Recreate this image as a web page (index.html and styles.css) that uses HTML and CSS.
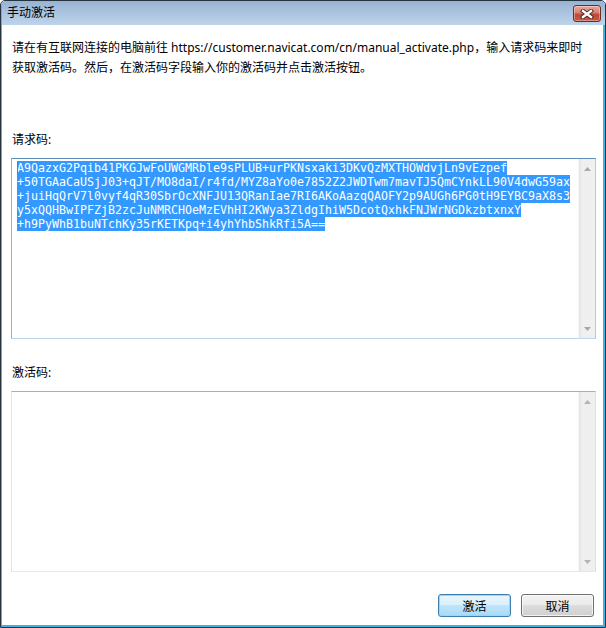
FILE: index.html
```html
<!DOCTYPE html>
<html lang="zh-CN">
<head>
    <meta charset="UTF-8">
    <title>手动激活</title>
    <link rel="stylesheet" href="styles.css">
</head>
<body>
    <div class="window">
        <div class="titlebar">
            <span class="title">手动激活</span>
            <button type="button" class="close-btn">
                <svg width="14" height="10" viewBox="0 0 14 10">
                    <path d="M3 2 L11 8 M11 2 L3 8" stroke="#4a2520" stroke-width="4.2" stroke-linecap="square"/>
                    <path d="M3 2 L11 8 M11 2 L3 8" stroke="#ffffff" stroke-width="2.4" stroke-linecap="square"/>
                </svg>
            </button>
        </div>

        <div class="frame">
            <div class="client">
                <p class="intro">请在有互联网连接的电脑前往 https://customer.navicat.com/cn/manual_activate.php，输入请求码来即时<br>获取激活码。然后，在激活码字段输入你的激活码并点击激活按钮。</p>

                <div class="field-label">请求码:</div>
                <div class="textbox focused">
                    <div class="textbox-body code">
                        <div class="code-line"><span class="sel"><span class="caret"></span>A9QazxG2Pqib41PKGJwFoUWGMRble9sPLUB+urPKNsxaki3DKvQzMXTHOWdvjLn9vEzpef</span></div>
                        <div class="code-line"><span class="sel">+50TGAaCaUSjJ03+qJT/MO8daI/r4fd/MYZ8aYo0e7852Z2JWDTwm7mavTJ5QmCYnkLL90V4dwG59ax</span></div>
                        <div class="code-line"><span class="sel">+juiHqQrV7l0vyf4qR30SbrOcXNFJU13QRanIae7RI6AKoAazqQAOFY2p9AUGh6PG0tH9EYBC9aX8s3</span></div>
                        <div class="code-line"><span class="sel">y5xQQHBwIPFZjB2zcJuNMRCHOeMzEVhHI2KWya3ZldgIhiW5DcotQxhkFNJWrNGDkzbtxnxY</span></div>
                        <div class="code-line"><span class="sel">+h9PyWhB1buNTchKy35rKETKpq+i4yhYhbShkRfi5A==</span></div>
                    </div>
                    <div class="scrollbar">
                        <div class="arrow"><svg width="7" height="4" viewBox="0 0 7 4"><path d="M0 4 L3.5 0 L7 4 Z" fill="#a8a8a8"/></svg></div>
                        <div class="arrow"><svg width="7" height="4" viewBox="0 0 7 4"><path d="M0 0 L7 0 L3.5 4 Z" fill="#a8a8a8"/></svg></div>
                    </div>
                </div>

                <div class="field-label second">激活码:</div>
                <div class="textbox">
                    <div class="textbox-body"></div>
                    <div class="scrollbar">
                        <div class="arrow"><svg width="7" height="4" viewBox="0 0 7 4"><path d="M0 4 L3.5 0 L7 4 Z" fill="#b4b4b4"/></svg></div>
                        <div class="arrow"><svg width="7" height="4" viewBox="0 0 7 4"><path d="M0 0 L7 0 L3.5 4 Z" fill="#b4b4b4"/></svg></div>
                    </div>
                </div>

                <div class="actions">
                    <button type="button" class="btn btn-default">激活</button>
                    <button type="button" class="btn">取消</button>
                </div>
            </div>
        </div>
    </div>
</body>
</html>
```

FILE: styles.css
```css
* {
    margin: 0;
    padding: 0;
    box-sizing: border-box;
}
body {
    width: 606px;
    height: 628px;
    background: #ffffff;
    font-family: "Noto Sans", "Noto Sans CJK SC", sans-serif;
    font-size: 12px;
    color: #000000;
}
.window {
    width: 606px;
    height: 628px;
    border: 1px solid #25333f;
    border-radius: 5px 5px 0 0;
    display: flex;
    flex-direction: column;
    overflow: hidden;
    background: #ffffff;
}
.titlebar {
    height: 24px;
    flex-shrink: 0;
    display: flex;
    justify-content: space-between;
    align-items: flex-start;
    background: linear-gradient(to bottom, #98b3d2 0%, #a9c2de 45%, #bed4ea 100%);
    border-left: 1px solid #8aa6c6;
}
.title {
    padding-left: 5px;
    line-height: 24px;
}
.close-btn {
    width: 28px;
    height: 17px;
    margin-top: 4px;
    margin-right: 4px;
    border: 1px solid #6b2e27;
    border-radius: 3px;
    background: linear-gradient(to bottom, #e8a99e 0%, #d7806f 45%, #c24a36 55%, #c6563f 100%);
    box-shadow: inset 0 0 0 1px rgba(255, 255, 255, 0.35);
    display: flex;
    align-items: center;
    justify-content: center;
}
.frame {
    flex: 1;
    border-left: 1px solid #7aa3cc;
    border-right: 2px solid #3fb2e2;
    border-bottom: 2px solid #3fb2e2;
    display: flex;
}
.client {
    flex: 1;
    background: #ffffff;
    padding: 13px 7px 8px 9px;
    display: flex;
    flex-direction: column;
}
.intro {
    line-height: 20px;
    padding-left: 1px;
    white-space: nowrap;
}
.field-label {
    line-height: 20px;
    padding-left: 1px;
    margin-top: 52px;
}
.field-label.second {
    margin-top: 24px;
}
.textbox {
    margin-top: 8px;
    height: 181px;
    display: flex;
    border: 1px solid;
    border-color: #abadb3 #dbdfe6 #e3e9ef #e2e3ea;
}
.textbox.focused {
    border-color: #5d8dbb #a9cbe7 #b9d8ee #8db2d3;
}
.textbox-body {
    flex: 1;
    padding: 2px 5px;
    overflow: hidden;
}
.code {
    font-family: "DejaVu Sans Mono", monospace;
    font-size: 11.63px;
    line-height: 14px;
}
.code-line {
    height: 14px;
    white-space: pre;
}
.sel {
    display: inline-block;
    height: 14px;
    background: #3399ff;
    color: #ffffff;
    position: relative;
}
.caret {
    position: absolute;
    left: 0;
    top: 0;
    width: 1px;
    height: 14px;
    background: #c8671a;
}
.scrollbar {
    width: 17px;
    flex-shrink: 0;
    display: flex;
    flex-direction: column;
    justify-content: space-between;
    background: linear-gradient(to right, #e3e3e3 0%, #efefef 20%, #f0f0f0 100%);
    border-left: 1px solid #f6f6f6;
}
.arrow {
    height: 19px;
    display: flex;
    align-items: center;
    justify-content: center;
}
.actions {
    margin-top: 22px;
    margin-right: 2px;
    display: flex;
    justify-content: flex-end;
    gap: 10px;
}
.btn {
    width: 73px;
    height: 23px;
    border: 1px solid #707070;
    border-radius: 3px;
    font-family: "Noto Sans", "Noto Sans CJK SC", sans-serif;
    font-size: 12px;
    color: #000000;
    background: linear-gradient(to bottom, #f2f2f2 0%, #ebebeb 50%, #dddddd 50%, #cfcfcf 100%);
    box-shadow: inset 0 0 0 1px rgba(255, 255, 255, 0.7);
}
.btn-default {
    border-color: #3c7fb1;
    background: linear-gradient(to bottom, #eaf6fd 0%, #d9f0fc 50%, #bee6fd 50%, #a7d9f5 100%);
    box-shadow: inset 0 0 0 1px #9ad7f7;
}
```
